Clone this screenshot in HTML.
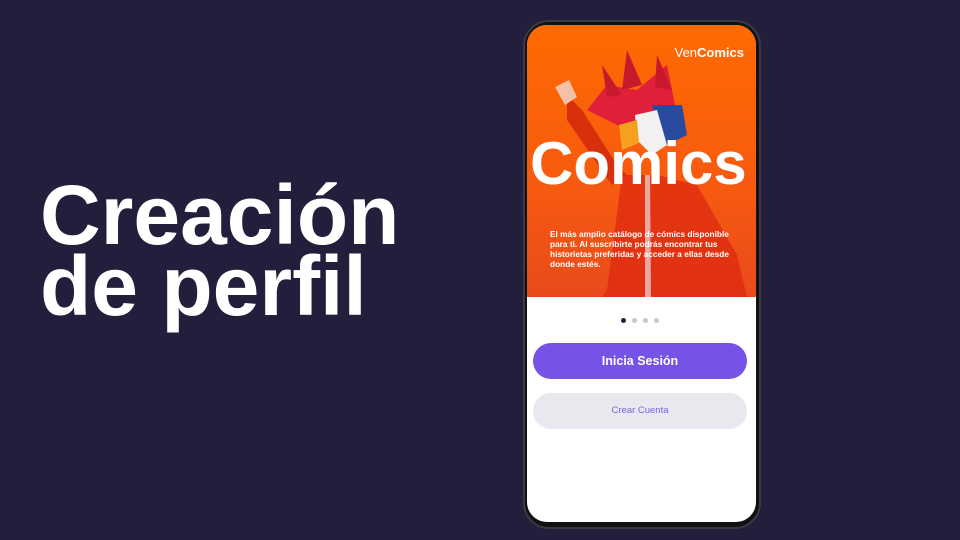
<!DOCTYPE html>
<html><head><meta charset="utf-8"><style>
*{margin:0;padding:0;box-sizing:border-box}
body{width:960px;height:540px;background:#221f3c;position:relative;overflow:hidden;font-family:"Liberation Sans",sans-serif}
.h{position:absolute;left:40px;top:180px;color:#fff;font-weight:bold;font-size:84px;line-height:71px;letter-spacing:0px}
.phone{position:absolute;left:523px;top:20px;width:238px;height:509px;border-radius:26px;background:#111;border:2px solid #3a3a44}
.screen{position:absolute;left:527px;top:25px;width:229px;height:497px;border-radius:20px;background:#fff;overflow:hidden}
.hero{position:absolute;left:0;top:0;width:229px;height:272px;background:linear-gradient(180deg,#ff6a00 0%,#f65a10 60%,#e94a1c 100%)}
.logo{position:absolute;right:12px;top:20px;color:#fff;font-size:13px}
.big{position:absolute;left:3px;top:109px;color:#fff;font-weight:bold;font-size:60px;line-height:60px;letter-spacing:0}
.p{position:absolute;left:23px;top:204px;width:185px;color:#fff;font-size:8.3px;line-height:10px;font-weight:bold}
.dots{position:absolute;top:285px;left:94px}
.dots span{display:inline-block;width:5px;height:5px;border-radius:50%;background:#c8c8d0;margin-right:6px}
.b1{position:absolute;left:6px;top:318px;width:214px;height:36px;border-radius:18px;background:#7652e6;color:#fff;font-size:12.5px;font-weight:bold;text-align:center;line-height:36px}
.b2{position:absolute;left:6px;top:368px;width:214px;height:36px;border-radius:18px;background:#e8e8ee;color:#7b62e0;font-size:9.5px;text-align:center;line-height:36px}
</style></head><body>
<div class="h">Creación<br>de perfil</div>
<div class="phone"></div>
<div class="screen">
<div class="hero">
<svg width="229" height="272" style="position:absolute;left:0;top:0">
<polygon points="80,265 95,150 130,150 170,160 210,230 220,272 75,272" fill="#e02a10" opacity=".8"/>
<polygon points="40,70 55,85 90,140 100,150 85,160 40,95" fill="#d8300c"/>
<polygon points="28,62 42,55 50,72 38,80" fill="#f4c0a8"/>
<polygon points="60,85 80,60 110,65 140,40 148,80 155,105 120,110 90,100" fill="#e0203a"/>
<polygon points="100,25 115,60 95,65" fill="#c8182c"/>
<polygon points="130,30 145,65 128,62" fill="#c8182c"/>
<polygon points="75,40 95,70 80,72" fill="#c8182c"/>
<polygon points="125,80 155,80 160,110 140,120" fill="#2a4aa0"/>
<polygon points="108,90 130,85 140,120 125,130 110,115" fill="#f2f0f0"/>
<polygon points="92,100 110,95 112,118 95,125" fill="#f6a020"/>
<polygon points="118,150 123,150 124,272 118,272" fill="#f0d8e0" opacity=".7"/>
</svg>
<div class="logo">Ven<b>Comics</b></div>
<div class="big">Comics</div>
<div class="p">El más amplio catálogo de cómics disponible para ti. Al suscribirte podrás encontrar tus historietas preferidas y acceder a ellas desde donde estés.</div>
</div>
<div class="dots"><span style="background:#222040"></span><span></span><span></span><span></span></div>
<div class="b1">Inicia Sesión</div>
<div class="b2">Crear Cuenta</div>
</div>
</body></html>
